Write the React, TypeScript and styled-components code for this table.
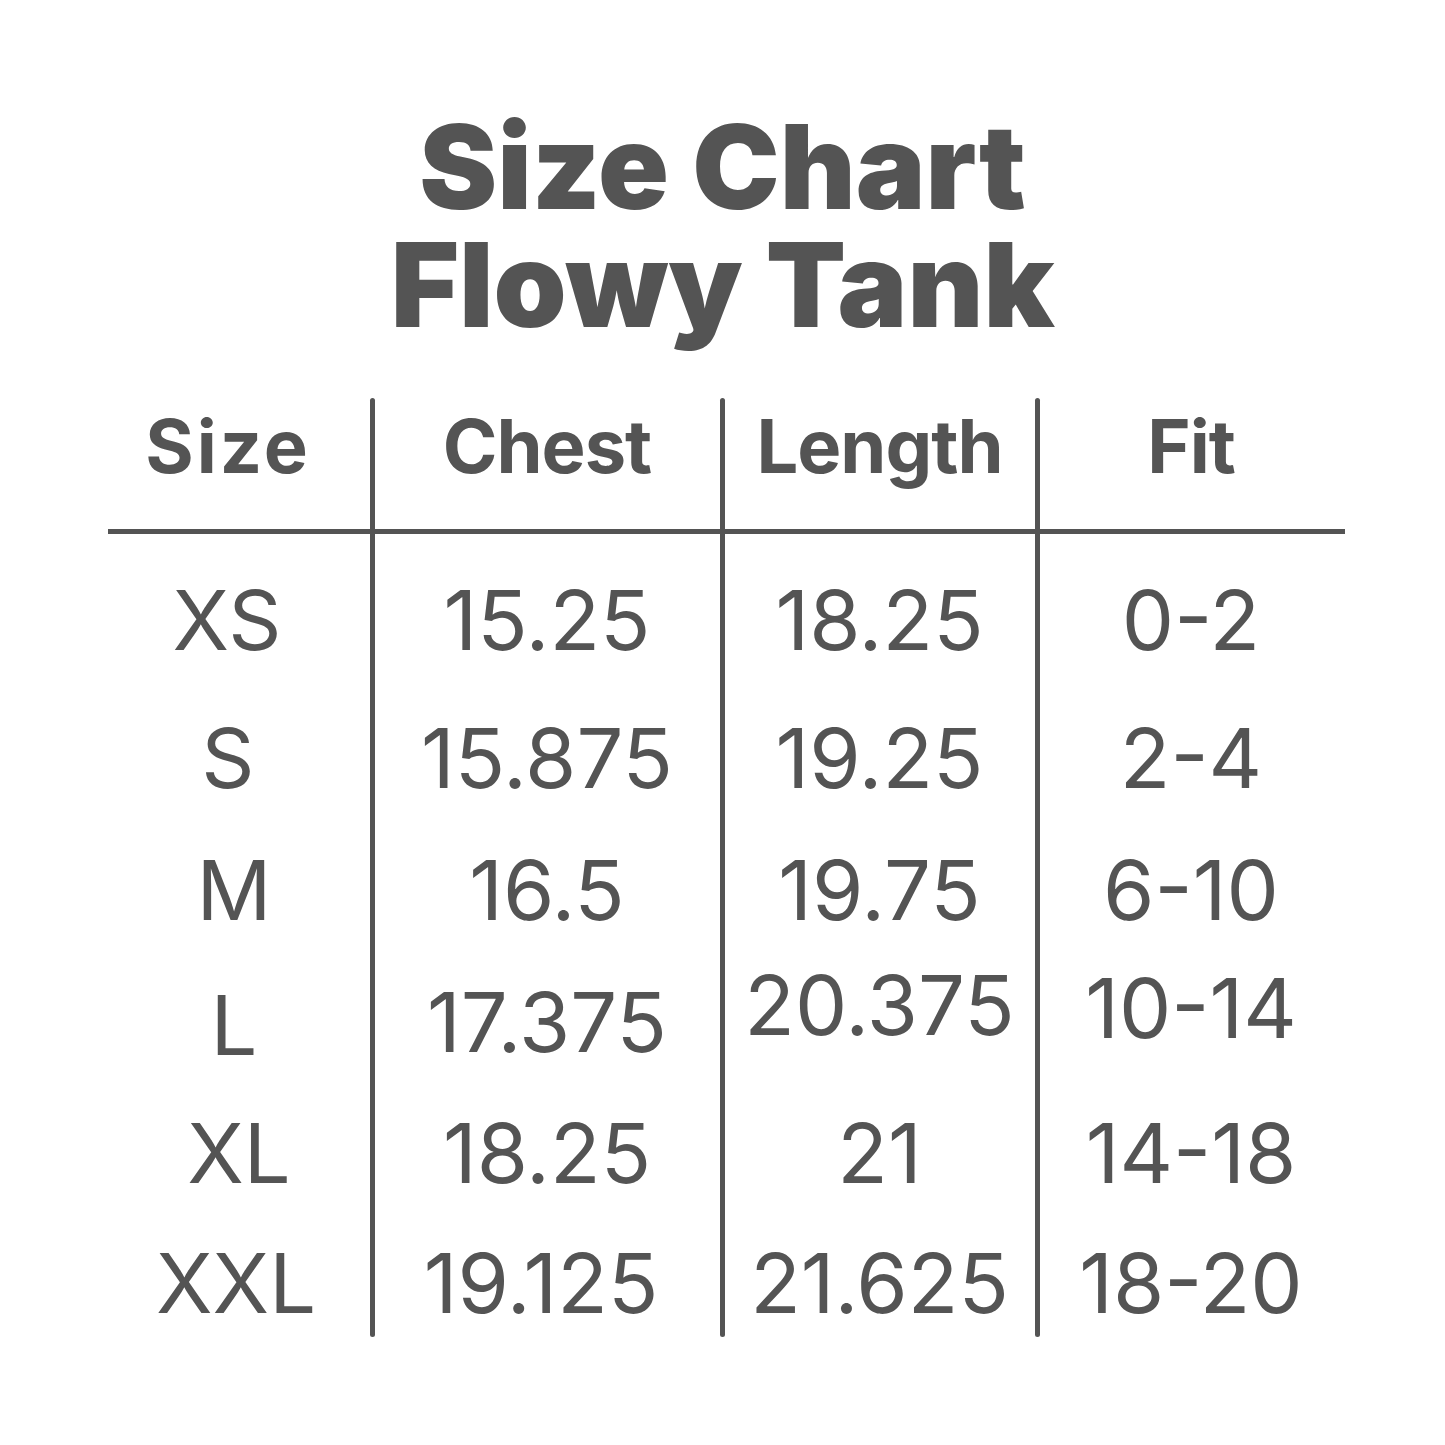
import React from "react";
import styled, { createGlobalStyle } from "styled-components";

const ink = "#545454";

const GlobalStyle = createGlobalStyle`
  html, body {
    margin: 0;
    padding: 0;
    background: #ffffff;
  }
  body {
    font-family: Inter, Lato, sans-serif;
    color: ${ink};
  }
`;

const Page = styled.div`
  width: 1445px;
  height: 1445px;
  box-sizing: border-box;
  padding-top: 108px;
  display: flex;
  flex-direction: column;
  align-items: center;
  background: #ffffff;
`;

const Title = styled.h1`
  margin: 0;
  font-size: 117px;
  line-height: 118px;
  font-weight: 900;
  text-align: center;
  color: ${ink};
`;

const Table = styled.div`
  margin-top: 54px;
  margin-left: 8px;
  width: 1237px;
  display: grid;
  grid-template-columns: 264px 350px 315px 308px;
`;

const Column = styled.div<{ $divider?: boolean }>`
  position: relative;
  display: flex;
  flex-direction: column;

  &::before {
    content: "";
    display: ${(p) => (p.$divider ? "block" : "none")};
    position: absolute;
    left: -2px;
    top: 0;
    bottom: 0;
    width: 5px;
    border-radius: 3px;
    background: ${ink};
  }
`;

const HeadCell = styled.div<{ $shift?: number; $spaced?: boolean }>`
  height: 136px;
  box-sizing: border-box;
  padding-top: 11px;
  padding-right: ${(p) => p.$shift ?? 0}px;
  border-bottom: 5px solid ${ink};
  font-size: 74px;
  line-height: 1;
  font-weight: 700;
  text-align: center;
  letter-spacing: ${(p) => (p.$spaced ? "3px" : "-1px")};
`;

const Body = styled.div`
  display: flex;
  flex-direction: column;
  padding-top: 45px;
`;

const Cell = styled.div<{ $height: number; $lift?: number; $shift?: number }>`
  height: ${(p) => p.$height}px;
  margin-top: ${(p) => -(p.$lift ?? 0)}px;
  margin-bottom: ${(p) => p.$lift ?? 0}px;
  padding-right: ${(p) => (p.$shift ?? 0) > 0 ? p.$shift : 0}px;
  padding-left: ${(p) => (p.$shift ?? 0) < 0 ? -(p.$shift ?? 0) : 0}px;
  font-size: 83px;
  line-height: 1;
  font-weight: 400;
  text-align: center;
`;

const rowHeights = [138, 132, 135, 128, 130, 95];

type Col = {
  head: string;
  values: string[];
  lifts?: number[];
  shifts?: number[];
  headShift?: number;
};

const columns: Col[] = [
  {
    head: "Size",
    values: ["XS", "S", "M", "L", "XL", "XXL"],
    headShift: 24,
    shifts: [26, 24, 12, 12, 2, 8],
  },
  {
    head: "Chest",
    values: ["15.25", "15.875", "16.5", "17.375", "18.25", "19.125"],
    lifts: [0, 0, 0, 3, 0, 0],
    shifts: [0, 0, 0, 0, 0, 12],
  },
  {
    head: "Length",
    values: ["18.25", "19.25", "19.75", "20.375", "21", "21.625"],
    lifts: [0, 0, 0, 20, 0, 0],
  },
  {
    head: "Fit",
    values: ["0-2", "2-4", "6-10", "10-14", "14-18", "18-20"],
    lifts: [0, 0, 0, 17, 0, 0],
  },
];

export default function App() {
  return (
    <>
      <GlobalStyle />
      <Page>
        <Title>
          Size Chart
          <br />
          Flowy Tank
        </Title>
        <Table>
          {columns.map((col, ci) => (
            <Column key={col.head} $divider={ci > 0}>
              <HeadCell $shift={col.headShift} $spaced={ci === 0}>
                {col.head}
              </HeadCell>
              <Body>
                {col.values.map((v, ri) => (
                  <Cell
                    key={v + ri}
                    $height={rowHeights[ri]}
                    $lift={col.lifts ? col.lifts[ri] : 0}
                    $shift={col.shifts ? col.shifts[ri] : 0}
                  >
                    {v}
                  </Cell>
                ))}
              </Body>
            </Column>
          ))}
        </Table>
      </Page>
    </>
  );
}
